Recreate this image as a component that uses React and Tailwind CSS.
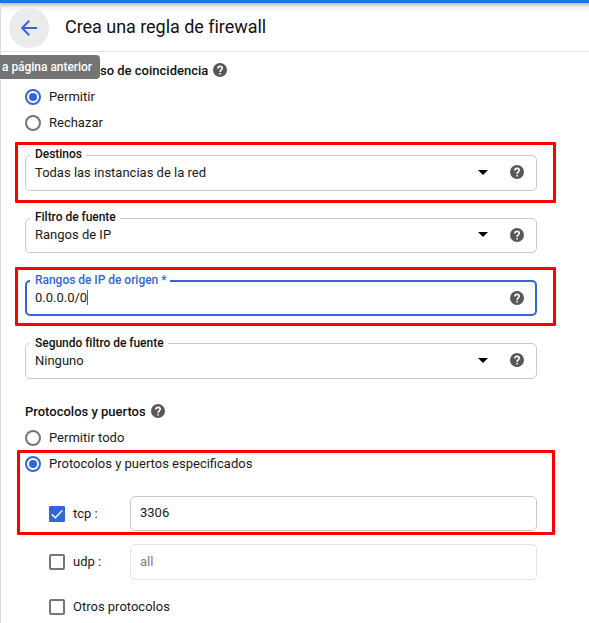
import React from "react";

function HelpIcon({ className = "" }) {
  return (
    <svg className={`size-[14px] shrink-0 ${className}`} viewBox="0 0 14 14" fill="none">
      <circle cx="7" cy="7" r="7" fill="#585858" />
      <path d="M4.900 5.500C4.900 4.200 5.800 3.400 7 3.400s2.200.8 2.200 1.900c0 1.500-2.100 1.700-2.100 3.600" stroke="#fff" strokeWidth="1.600" />
      <path d="M6.300 9.900h1.600v1.500H6.300z" fill="#fff" />
    </svg>
  );
}

function Radio({ label, checked }) {
  return (
    <label className="flex h-[26px] items-center">
      <span
        className={`flex size-4 shrink-0 items-center justify-center rounded-full border-2 ${
          checked ? "border-[#3367d6]" : "border-[#757575]"
        }`}
      >
        {checked && <span className="size-2 rounded-full bg-[#3367d6]" />}
      </span>
      <span className="ml-2 whitespace-nowrap">{label}</span>
    </label>
  );
}

function Checkbox({ checked }) {
  return checked ? (
    <span className="size-4 shrink-0 rounded-[1px] bg-[#3367d6]">
      <svg className="size-4" viewBox="0 0 16 16" fill="none" stroke="#fff" strokeWidth="1.4">
        <path d="M2.800 8.300l3.500 3.500 7-7.300" />
      </svg>
    </span>
  ) : (
    <span className="size-4 shrink-0 rounded-[2px] border-2 border-[#757575]" />
  );
}

function Field({ label, value, select, focused, box, labelClass, valueClass, arrowClass, helpClass }) {
  return (
    <div
      className={`relative flex w-[512px] items-start rounded-[5px] ${
        focused ? "border-2 border-[#3367d6] pl-2 pr-[11px]" : "border border-[#c9c9c9] pl-[9px] pr-3"
      } ${box}`}
    >
      <span
        className={`absolute h-4 bg-white pr-1 pl-[5px] text-[12px] leading-4 font-medium tracking-[-0.03px] whitespace-nowrap ${
          focused ? "left-[3px] text-[#3367d6]" : "left-1 text-[#111]"
        } ${labelClass}`}
      >
        {label}
      </span>
      <span className={`flex flex-1 leading-5 whitespace-nowrap ${valueClass}`}>
        {value}
        {focused && <span className="mt-[2px] h-[15px] w-px bg-[#3367d6]" />}
      </span>
      {select && (
        <svg className={`mr-[22px] h-[5px] w-[10px] ${arrowClass}`} viewBox="0 0 10 5">
          <path d="M0 0h10L5 5z" fill="#000" />
        </svg>
      )}
      <HelpIcon className={helpClass} />
    </div>
  );
}

function Mark({ className, children }) {
  return <section className={`border-[3px] border-[#fe0000] rounded-[1px] ${className}`}>{children}</section>;
}

export default function App() {
  return (
    <div className="h-[623px] w-[589px] overflow-hidden bg-white font-[Roboto,sans-serif] text-[13px] leading-5 text-[#1a1a1a]">
      <div className="h-[3px] bg-[#1a73e8]" />
      <div className="relative h-[620px] border-l border-[#dadada]">
        <header className="flex h-[49px] items-center border-b border-[#dedede] bg-[linear-gradient(to_bottom,#bdbdbd_0px,#d5d5d5_2px,#eeeeee_4px,#fafafa_7px,#ffffff_10px)] pl-2">
          <div className="mt-px flex size-10 items-center justify-center rounded-full bg-[#ebebeb]">
            <svg className="size-4" viewBox="0 0 16 16" fill="none" stroke="#3367d6" strokeWidth="2">
              <path d="M16 8H1.500M8.300 .7L1.200 8l7.100 7.300" />
            </svg>
          </div>
          <h1 className="ml-4 text-[18px] leading-6 font-normal tracking-[-0.04px] text-[#111]">Crea una regla de firewall</h1>
        </header>
        <div className="absolute top-[52px] -left-1 flex h-6 w-[103px] items-center rounded-[4px] bg-[#747474] pl-[5px] text-[12px] font-medium tracking-[-0.03px] whitespace-nowrap text-white">
          a página anterior
        </div>
        <main className="flex flex-col">
          <h2 className="mt-[9px] flex h-5 items-center pl-[99px] font-medium text-[#111]">
            <span className="w-[113px] whitespace-nowrap">so de coincidencia</span>
            <HelpIcon className="mb-0.5" />
          </h2>
          <div className="mt-[3px] h-[58px] pl-6">
            <Radio label="Permitir" checked />
            <Radio label="Rechazar" />
          </div>

          <Mark className="ml-[14px] h-[61px] w-[541px] pt-[10px] pl-[7px]">
            <Field label="Destinos" value="Todas las instancias de la red" select box="h-9" labelClass="-top-[10px]" valueClass="mt-[7px]" arrowClass="mt-[14px]" helpClass="mt-[9px]" />
          </Mark>
          <div className="mt-[15px] ml-6">
            <Field label="Filtro de fuente" value="Rangos de IP" select box="h-[35px]" labelClass="-top-[10px]" valueClass="mt-[6px]" arrowClass="mt-[13px]" helpClass="mt-[9px]" />
          </div>
          <Mark className="mt-[14px] ml-[14px] h-[59px] w-[541px] pt-[10px] pl-[7px]">
            <Field label="Rangos de IP de origen *" value="0.0.0.0/0" focused box="h-9" labelClass="-top-[10px]" valueClass="mt-[6px]" helpClass="mt-[9px]" />
          </Mark>
          <div className="mt-[17px] ml-6">
            <Field label="Segundo filtro de fuente" value="Ninguno" select box="h-9" labelClass="-top-[9px]" valueClass="mt-[7px]" arrowClass="mt-[14px]" helpClass="mt-[9px]" />
          </div>

          <h2 className="mt-[23px] flex h-5 items-center pl-6 font-medium text-[#111]">
            <span className="w-[126px] whitespace-nowrap">Protocolos y puertos</span>
            <HelpIcon className="mb-0.5" />
          </h2>
          <div className="mt-[3px] h-[25px] pl-6">
            <Radio label="Permitir todo" />
          </div>

          <Mark className="ml-4 h-[85px] w-[538px] pl-[5px]">
            <div className="-mt-[2px]">
              <Radio label="Protocolos y puertos especificados" checked />
            </div>
            <div className="mt-[19px] flex items-center pl-6">
              <Checkbox checked />
              <span className="ml-2 w-[57px]">tcp :</span>
              <div className="h-[35px] w-[407px] rounded-[5px] border border-[#c9c9c9] pt-[6px] pl-[9px]">3306</div>
            </div>
          </Mark>
          <div className="mt-[9px] flex items-center pl-12">
            <Checkbox />
            <span className="ml-2 w-[57px]">udp :</span>
            <div className="h-9 w-[407px] rounded-[5px] border border-[#e3e3e3] pt-[7px] pl-[9px] text-[#7d7d7d]">all</div>
          </div>
          <div className="mt-[17px] flex h-5 items-center pl-12">
            <Checkbox />
            <span className="ml-2">Otros protocolos</span>
          </div>
        </main>
      </div>
    </div>
  );
}
